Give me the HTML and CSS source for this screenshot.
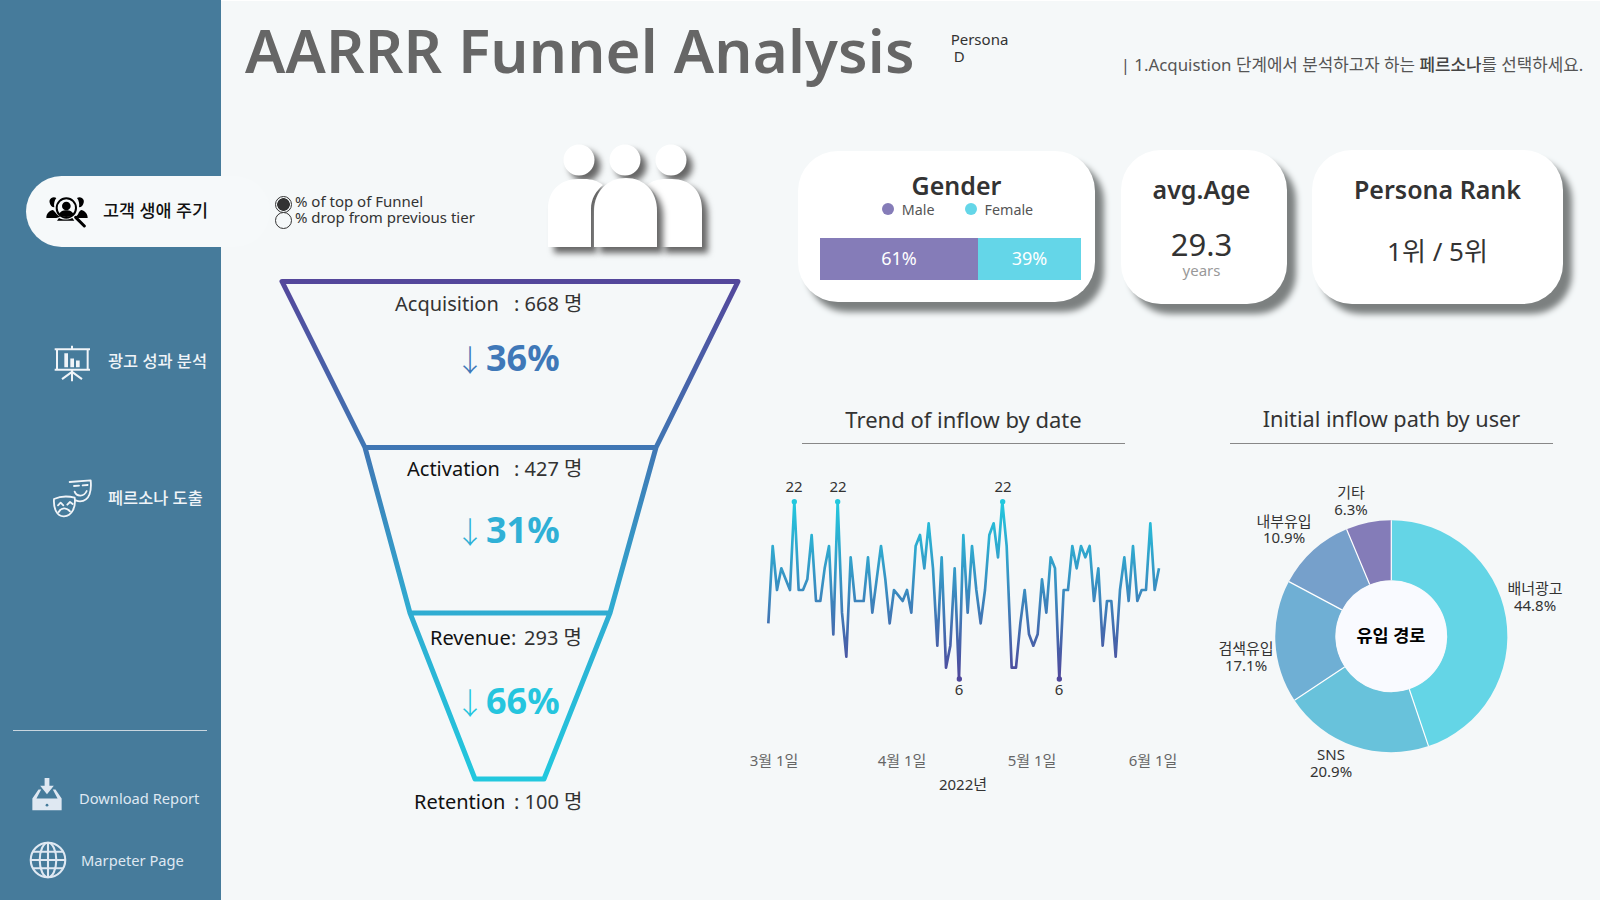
FILE: index.html
```html
<!DOCTYPE html>
<html lang="ko">
<head>
<meta charset="utf-8">
<title>AARRR Funnel Analysis</title>
<link rel="stylesheet" href="styles.css">
</head>
<body>
<div class="app">
  <aside class="sidebar">
    <nav class="nav">
      <a class="nav-active">
        <svg class="icon-active" viewBox="136 196 132 96">
          <path class="ic-black" d="M140 262c0-14 10-22 20-24l6 6c6 8 10 12 16 14l-12 4zM150 216a13 13 0 0 1 20-14c-6 8-8 18-6 28-8 0-12-6-14-14zM264 262c0-14-10-22-20-24l-6 6c-2 6-6 12-12 15l10 3zM252 216a13 13 0 0 0-20-14c6 8 8 18 6 28 8 0 12-6 14-14z"/>
          <circle class="ic-ring" cx="200" cy="232" r="29"/>
          <circle class="ic-black" cx="200" cy="226" r="13"/>
          <path class="ic-black" d="M178 252c2-9 12-13 22-13s20 4 22 13c-12 9-32 9-44 0zM172 270h52l-6-8c-12 6-28 6-40 0z"/>
          <path class="ic-handle" d="M228 260l26 26"/>
        </svg>
        <span class="nav-active-text">고객 생애 주기</span>
      </a>
      <a class="nav-item nav-ads">
        <svg class="nav-icon" viewBox="155 645 120 115">
          <path class="ic-line" d="M163 658h106M170 658v62h92v-62M163 720h106M215 648v10M215 720v34M215 726l-30 22M215 726l30 22"/>
          <path class="ic-fill" d="M192 670h11v42h-11zM210 686h11v26h-11zM227 692h11v20h-11z"/>
        </svg>
        <span>광고 성과 분석</span>
      </a>
      <a class="nav-item nav-persona">
        <svg class="nav-icon" viewBox="154 116 120 116">
          <path class="ic-thin" d="M207 126l63-5c3 30-2 62-32 63-4 0-8-1-13-3M160 177c18-8 42-9 62-4 4 28-8 55-32 56-22 1-32-25-30-52z"/>
          <path class="ic-thin" d="M220 138l15-1M246 136l15-1M222 155c6 16 28 16 36-2M172 196l8-8 8 8M200 194l8-8 8 6M174 216c8-14 24-14 34-2"/>
        </svg>
        <span>페르소나 도출</span>
      </a>
    </nav>
    <div class="side-foot">
      <a class="foot-item">
        <svg class="foot-icon" viewBox="94 1006 94 102">
          <path class="ic-pale" d="M98 1105v-35l18-26h8l-14 26h62l-14-26h8l18 26v35z"/>
          <path class="ic-pale" d="M134 1010h14v23h13l-20 25-20-25h13z"/>
          <circle class="ic-hole" cx="141" cy="1090" r="4"/>
        </svg>
        <span class="foot-text">Download Report</span>
      </a>
      <a class="foot-item foot-globe">
        <svg class="foot-icon" viewBox="90 1205 110 110">
          <g class="ic-globe">
            <circle cx="145" cy="1260" r="50"/>
            <ellipse cx="145" cy="1260" rx="24" ry="50"/>
            <path d="M145 1210v100M95 1260h100M102 1236h86M102 1284h86"/>
          </g>
        </svg>
        <span>Marpeter Page</span>
      </a>
    </div>
  </aside>

  <main class="main">
    <header class="header">
      <h1 class="title">AARRR Funnel Analysis</h1>
      <div class="persona-pick">
        <div>Persona</div>
        <div class="persona-val">D</div>
      </div>
      <p class="hint">| 1.Acquistion 단계에서 분석하고자 하는 <b>페르소나</b>를 선택하세요.</p>
    </header>

    <div class="content">
      <section class="left">
        <div class="controls">
          <div class="radios">
            <label class="radio"><input type="radio" name="mode" checked><span>% of top of Funnel</span></label>
            <label class="radio"><input type="radio" name="mode"><span>% drop from previous tier</span></label>
          </div>
          <svg class="people" viewBox="540 140 180 125">
            <circle class="person" cx="579" cy="160" r="15.5"/>
            <circle class="person" cx="625" cy="160" r="15.5"/>
            <circle class="person" cx="671" cy="160" r="15.5"/>
            <path class="person" d="M548 247v-38c0-18 12-30 30-30h6c8 0 14 2 19 6-7 6-12 14-12 24v38z"/>
            <path class="person" d="M659 247v-38c0-10-5-18-12-24 5-4 11-6 19-6h6c18 0 30 12 30 30v38z"/>
            <path class="person" d="M594 247v-36c0-20 14-33 32-33s31 13 31 33v36z"/>
          </svg>
        </div>
        <svg class="funnel" viewBox="270 270 475 560">
          <defs>
            <linearGradient id="fg" gradientUnits="userSpaceOnUse" x1="0" y1="280" x2="0" y2="780">
              <stop offset="0" stop-color="#54479b"/>
              <stop offset="0.33" stop-color="#4076b4"/>
              <stop offset="0.67" stop-color="#2fadd2"/>
              <stop offset="1" stop-color="#22c8de"/>
            </linearGradient>
          </defs>
          <path class="funnel-line" d="M282 281.500H738L656 447.500L610 613L544 779H475L410 613L365 447.500ZM365 447.500H656M410 613H610"/>
          <text class="f-label" x="395" y="311">Acquisition</text><text class="f-value" x="514" y="311">: 668 명</text>
          <text class="f-label f-dark" x="407" y="476">Activation</text><text class="f-value" x="514" y="476">: 427 명</text>
          <text class="f-label f-dark" x="430" y="645">Revenue</text><text class="f-value" x="511" y="645">:<tspan x="524">293 명</tspan></text>
          <text class="f-label f-dark" x="414" y="809">Retention</text><text class="f-value" x="514" y="809">: 100 명</text>
          <text class="f-arrow f-c1" x="455" y="371">↓</text><text class="f-pct f-c1" x="486" y="371">36%</text>
          <text class="f-arrow f-c2" x="455" y="543">↓</text><text class="f-pct f-c2" x="486" y="543">31%</text>
          <text class="f-arrow f-c3" x="455" y="714">↓</text><text class="f-pct f-c3" x="486" y="714">66%</text>
        </svg>
      </section>

      <section class="right">
        <div class="cards">
          <article class="card card-gender">
            <h2 class="card-title">Gender</h2>
            <ul class="legend">
              <li class="legend-item"><i class="dot dot-male"></i>Male</li>
              <li class="legend-item"><i class="dot dot-female"></i>Female</li>
            </ul>
            <div class="bar">
              <div class="bar-male">61%</div>
              <div class="bar-female">39%</div>
            </div>
          </article>
          <article class="card card-age">
            <h2 class="card-title">avg.Age</h2>
            <div class="age-num">29.3</div>
            <div class="age-unit">years</div>
          </article>
          <article class="card card-rank">
            <h2 class="card-title">Persona Rank</h2>
            <div class="rank-num">1위 / 5위</div>
          </article>
        </div>

        <div class="charts">
          <div class="chart chart-trend">
            <h3 class="chart-title">Trend of inflow by date</h3>
            <svg class="chart-svg" viewBox="745 445 455 355">
              <defs>
                <linearGradient id="lg" gradientUnits="userSpaceOnUse" x1="0" y1="95" x2="0" y2="627">
                  <stop offset="0" stop-color="#22c8de"/>
                  <stop offset="0.5" stop-color="#3a8cc0"/>
                  <stop offset="1" stop-color="#4f479b"/>
                </linearGradient>
              </defs>
              <g transform="translate(740 470) scale(0.33333)">
                <polyline class="trend-line" points="85,460 98,228 111,360 124,295 137,328 150,360 163,95 176,360 189,360 202,328 215,195 228,393 241,393 254,295 267,228 280,493 293,95 306,428 319,560 332,262 345,393 358,393 371,393 384,262 397,428 410,328 423,228 436,328 449,460 462,360 475,376 488,393 501,360 514,428 527,228 540,195 553,295 566,160 579,295 592,527 605,262 618,593 631,527 644,295 657,627 670,195 683,428 696,228 709,360 722,460 735,360 748,195 761,160 774,262 787,95 800,228 815,593 828,593 841,460 854,360 867,493 880,527 893,493 906,328 919,428 932,262 945,295 958,627 971,360 984,360 997,228 1010,295 1023,228 1036,262 1049,228 1062,393 1075,295 1088,527 1101,393 1114,393 1127,560 1140,360 1153,262 1166,393 1179,228 1192,393 1205,360 1218,360 1231,160 1244,360 1257,295"/>
                <circle class="pt-top" cx="163" cy="95" r="8"/>
                <circle class="pt-top" cx="293" cy="95" r="8"/>
                <circle class="pt-top" cx="788" cy="95" r="8"/>
                <circle class="pt-low" cx="658" cy="627" r="8"/>
                <circle class="pt-low" cx="958" cy="627" r="8"/>
              </g>
              <text class="c-label" x="794" y="492">22</text>
              <text class="c-label" x="838" y="492">22</text>
              <text class="c-label" x="1003" y="492">22</text>
              <text class="c-label" x="959" y="695">6</text>
              <text class="c-label" x="1059" y="695">6</text>
              <text class="c-axis" x="774" y="766">3월 1일</text>
              <text class="c-axis" x="902" y="766">4월 1일</text>
              <text class="c-axis" x="1032" y="766">5월 1일</text>
              <text class="c-axis" x="1153" y="766">6월 1일</text>
              <text class="c-label" x="963" y="790">2022년</text>
            </svg>
          </div>
          <div class="chart chart-path">
            <h3 class="chart-title chart-title-path">Initial inflow path by user</h3>
            <svg class="chart-svg" viewBox="1200 445 400 355">
              <g transform="translate(1391.300 636.200)">
                <path class="seg-1" d="M0 -116A116 116 0 0 1 37.200 109.900L18 53A56 56 0 0 0 0 -56Z"/>
                <path class="seg-2" d="M37.200 109.900A116 116 0 0 1 -96.800 64L-46.700 30.900A56 56 0 0 0 18 53Z"/>
                <path class="seg-3" d="M-96.800 64A116 116 0 0 1 -102.400 -54.600L-49.400 -26.300A56 56 0 0 0 -46.700 30.900Z"/>
                <path class="seg-4" d="M-102.400 -54.600A116 116 0 0 1 -44.700 -107L-21.600 -51.700A56 56 0 0 0 -49.400 -26.300Z"/>
                <path class="seg-5" d="M-44.700 -107A116 116 0 0 1 0 -116L0 -56A56 56 0 0 0 -21.600 -51.700Z"/>
                <path class="seg-gap" d="M0 -116V-56M37.200 109.900L18 53M-96.800 64L-46.700 30.900M-102.400 -54.600L-49.400 -26.300M-44.700 -107L-21.600 -51.700"/>
                <circle class="donut-hole" r="55.500"/>
              </g>
              <text class="donut-center" x="1391" y="642">유입 경로</text>
              <text class="c-label" x="1351" y="498">기타</text><text class="c-label" x="1351" y="515">6.3%</text>
              <text class="c-label" x="1284" y="527">내부유입</text><text class="c-label" x="1284" y="543">10.9%</text>
              <text class="c-label" x="1535" y="594">배너광고</text><text class="c-label" x="1535" y="611">44.8%</text>
              <text class="c-label" x="1246" y="654">검색유입</text><text class="c-label" x="1246" y="671">17.1%</text>
              <text class="c-label" x="1331" y="760">SNS</text><text class="c-label" x="1331" y="777">20.9%</text>
            </svg>
          </div>
        </div>
      </section>
    </div>
  </main>
</div>
</body>
</html>
```
FILE: styles.css
```css
* { box-sizing: border-box; }
html, body { margin: 0; height: 100%; }
body {
  font-family: "Noto Sans", "Noto Sans CJK KR", sans-serif;
  color: #333;
  background: #f5f8f9;
  overflow: hidden;
}
.app { display: grid; grid-template-columns: 221px 1fr; height: 900px; }

/* sidebar */
.sidebar {
  background: #467b9b;
  display: flex;
  flex-direction: column;
  padding-top: 176px;
  position: relative;
  z-index: 1;
}
.nav { display: flex; flex-direction: column; }
.nav-active {
  display: flex;
  align-items: center;
  margin-left: 26px;
  width: 244px;
  height: 71px;
  padding-left: 19px;
  gap: 14px;
  background: #f6f9fa;
  border-radius: 36px;
  color: #111;
  font-size: 17.4px;
  font-weight: 500;
}
.nav-active-text { margin-bottom: 5px; }
.icon-active { width: 44px; height: 32px; flex: none; }
.nav-item {
  display: flex;
  align-items: center;
  height: 40px;
  padding-left: 52px;
  gap: 16px;
  color: #f0f4f8;
  font-size: 16.4px;
  font-weight: 500;
}
.nav-ads { margin-top: 97px; }
.nav-ads span { margin-bottom: 8px; }
.nav-persona { margin-top: 94px; }
.nav-persona span { margin-bottom: 2px; }
.nav-icon { width: 40px; height: 40px; flex: none; }
.ic-black { fill: #000; }
.ic-ring { fill: #f6f9fa; stroke: #000; stroke-width: 6; }
.ic-handle { stroke: #000; stroke-width: 9; stroke-linecap: round; fill: none; }
.ic-line { fill: none; stroke: #f0f4f8; stroke-width: 6; }
.ic-fill { fill: #f0f4f8; }
.ic-thin { fill: none; stroke: #f0f4f8; stroke-width: 5.500; stroke-linecap: round; stroke-linejoin: round; }
.ic-pale { fill: #dfe8f2; }
.ic-hole { fill: #467b9b; }
.ic-globe { fill: none; stroke: #dfe8f2; stroke-width: 6; }

.side-foot {
  margin: 212px 14px 0 13px;
  border-top: 1px solid #c9d6df;
  padding-top: 44px;
}
.foot-item {
  display: flex;
  align-items: center;
  height: 38px;
  padding-left: 18px;
  gap: 16px;
  color: #dfe8f2;
  font-size: 14.7px;
}
.foot-text { margin-top: 8px; }
.foot-globe { margin-top: 28px; padding-left: 16px; gap: 14px; }
.foot-icon { width: 32px; height: 36px; flex: none; }
.foot-globe .foot-icon { width: 38px; height: 38px; }

/* main */
.main { display: flex; flex-direction: column; min-width: 0; border-top: 1px solid #fff; }
.header { display: flex; align-items: flex-start; height: 139px; padding-left: 24px; }
.title {
  margin: 7px 0 0;
  font-size: 60px;
  line-height: 84px;
  font-weight: 600;
  color: #666;
  letter-spacing: 0.15px;
  white-space: nowrap;
}
.persona-pick { margin: 30px 0 0 36px; font-size: 15px; line-height: 17px; color: #333; width: 170px; flex: none; }
.persona-val { padding-left: 3px; }
.hint { margin: 52px 0 0 0; font-size: 16.850px; line-height: 24px; color: #555; white-space: nowrap; }
.hint b { font-weight: 500; color: #444; }

.content { display: grid; grid-template-columns: 524px 1fr; flex: 1; min-height: 0; }
.left { display: flex; flex-direction: column; }
.controls { display: flex; height: 130px; padding-left: 54px; }
.radios { margin-top: 56px; width: 265px; flex: none; }
.radio { display: flex; align-items: center; height: 16px; gap: 3px; font-size: 15px; color: #333; white-space: nowrap; }
.radio span { margin-bottom: 6px; }
.radio input {
  appearance: none;
  margin: 0;
  width: 17px;
  height: 17px;
  flex: none;
  border: 1px solid #333;
  border-radius: 50%;
  background: #f5f8f9;
}
.radio input:checked { background: radial-gradient(circle, #333 0 6px, #f5f8f9 6.6px); }
.people { width: 180px; height: 125px; flex: none; }
.person { fill: #fff; filter: drop-shadow(6px 6px 3px #666); }
.funnel { width: 475px; height: 560px; flex: none; display: block; margin-left: 49px; }
.funnel-line { fill: none; stroke: url(#fg); stroke-width: 5; stroke-linejoin: round; stroke-linecap: round; }
.f-label { font-size: 20px; fill: #333; }
.f-dark { fill: #111; }
.f-value { font-size: 20px; fill: #333; }
.f-pct { font-size: 36px; font-weight: 700; }
.f-arrow { font-size: 30px; font-weight: 300; font-family: "Noto Sans CJK KR", sans-serif; }
.f-c1 { fill: #3f78b8; }
.f-c2 { fill: #2fb0d6; }
.f-c3 { fill: #25c5de; }

.right { display: flex; flex-direction: column; min-width: 0; }
.cards { display: flex; align-items: flex-start; padding: 10px 0 0 53px; gap: 26px; }
.card {
  background: #fff;
  border-radius: 40px;
  box-shadow: 9px 10px 6px #7c8080;
  display: flex;
  flex-direction: column;
  align-items: center;
  flex: none;
}
.card-gender { width: 297px; height: 151px; margin-top: 1px; padding-top: 18px; }
.card-gender .card-title { margin-left: 20px; }
.card-age { width: 166px; height: 154px; padding: 23px 5px 0 0; }
.card-rank { width: 251px; height: 154px; padding-top: 23px; margin-left: -1px; }
.card-title { margin: 0; font-size: 25px; line-height: 32px; font-weight: 600; color: #333; }
.legend { list-style: none; display: flex; margin: -3px 0 0 22px; padding: 0; gap: 30px; height: 22px; }
.legend-item { display: flex; align-items: center; gap: 8px; font-size: 14.3px; color: #555; }
.dot { width: 12px; height: 12px; border-radius: 50%; }
.dot-male { background: #857cb8; }
.dot-female { background: #64d6e8; }
.bar { display: flex; width: 261px; height: 42px; margin: 18px 0 0 8px; color: #fff; font-size: 18px; }
.bar-male { width: 158px; padding-bottom: 2px; background: #857cb8; display: flex; align-items: center; justify-content: center; }
.bar-female { flex: 1; padding-bottom: 2px; background: #64d6e8; display: flex; align-items: center; justify-content: center; }
.age-num { font-size: 31px; line-height: 40px; margin-top: 19px; color: #333; }
.age-unit { font-size: 15px; line-height: 20px; color: #999; margin-top: -4px; }
.rank-num { font-size: 26px; line-height: 40px; margin-top: 26px; color: #333; }

.charts { display: flex; margin-top: 106px; }
.chart { flex: none; }
.chart-trend { width: 455px; }
.chart-path { width: 400px; }
.chart-title {
  margin: 0;
  width: 323px;
  height: 34px;
  font-size: 22px;
  line-height: 18px;
  font-weight: 400;
  text-align: center;
  color: #333;
  border-bottom: 1px solid #888;
}
.chart-title-path { font-size: 21.700px; }
.chart-trend .chart-title { margin-left: 57px; }
.chart-path .chart-title { margin-left: 30px; }
.chart-svg { display: block; width: 100%; height: 355px; margin-top: 1px; }
.trend-line { fill: none; stroke: url(#lg); stroke-width: 8; stroke-linejoin: round; }
.pt-top { fill: #22c8de; }
.pt-low { fill: #4f479b; }
.c-label { font-size: 15px; fill: #333; text-anchor: middle; }
.c-axis { font-size: 15px; fill: #666; text-anchor: middle; }
.donut-center { font-size: 17.500px; font-weight: 700; fill: #000; text-anchor: middle; }
.seg-1 { fill: #64d5e6; }
.seg-2 { fill: #68c2db; }
.seg-3 { fill: #6fafd4; }
.seg-4 { fill: #76a0cb; }
.seg-5 { fill: #847cb8; }
.seg-gap { stroke: #fff; stroke-width: 1.2; fill: none; }
.donut-hole { fill: #f9faff; }
```
